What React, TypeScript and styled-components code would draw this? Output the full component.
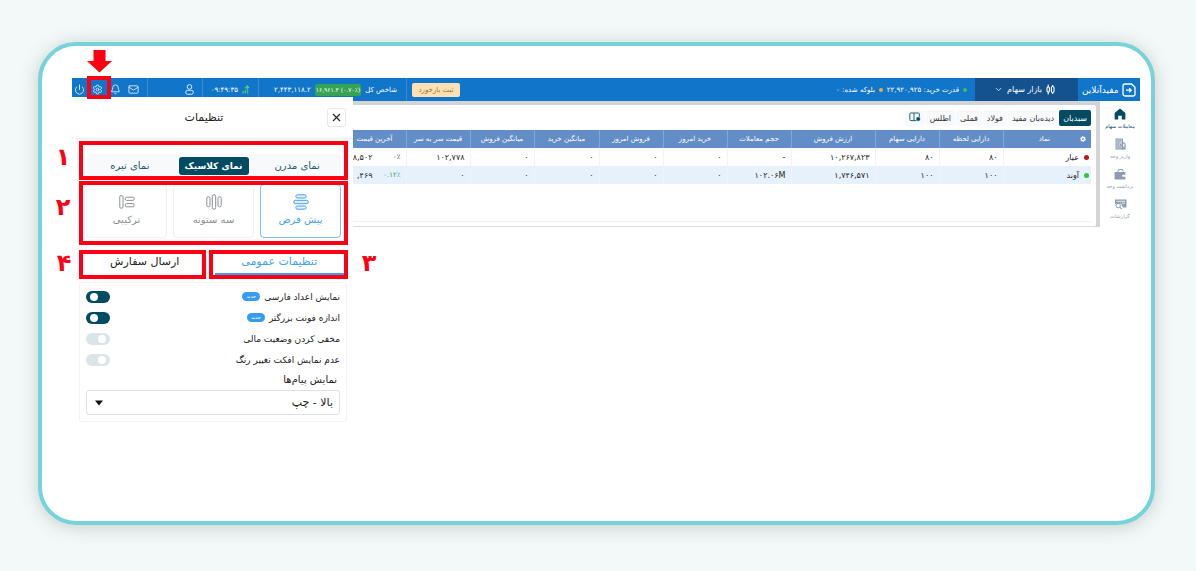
import React, { useState } from 'react';
import styled, { createGlobalStyle } from 'styled-components';
import { Mail, Bell, Power, X, ChevronDown, Settings } from 'lucide-react';

const GlobalStyle = createGlobalStyle`
  *, *::before, *::after { box-sizing: border-box; }
  html, body { margin: 0; background: #f3f9f9; }
  body, button, select, input {
    font-family: 'DejaVu Sans', sans-serif;
  }
  button, select, input { margin: 0; padding: 0; border: 0; background: none; color: inherit; }
  svg { flex: none; }
`;

const RED = '#fd0013';
const NAVY = '#034b63';
const BLUE = '#1175ca';

const Page = styled.div`
  display: flex;
  min-height: 100vh;
  padding: 42px 41px 46px 38px;
`;

const Frame = styled.main`
  flex: 1;
  min-width: 0;
  padding: 32px 11px 32px 30px;
  background: #fff;
  border: 4px solid #76d3d8;
  border-radius: 38px;
  box-shadow: 0 2px 18px rgba(70, 80, 80, 0.26);
`;

const Shell = styled.div`
  direction: rtl;
`;

const TopBar = styled.header`
  display: flex;
  align-items: stretch;
  height: 23px;
  background: ${BLUE};
  color: #fff;
  font-size: 7px;
  white-space: nowrap;
`;

const BarCell = styled.div<{ $width?: number; $divided?: boolean; $pad?: number; $gap?: number }>`
  display: flex;
  flex: none;
  align-items: center;
  gap: ${(p) => p.$gap ?? 4}px;
  width: ${(p) => (p.$width ? `${p.$width}px` : 'auto')};
  padding: 0 ${(p) => p.$pad ?? 8}px;
  border-right: ${(p) => (p.$divided ? '1px solid #3b8dd3' : '0')};
`;

const Brand = styled.a`
  display: flex;
  flex: none;
  align-items: center;
  justify-content: space-between;
  width: 62px;
  padding: 0 4px;
  color: #fff;
  text-decoration: none;
  font-size: 9px;
`;

const MarketButton = styled.button`
  display: flex;
  flex: none;
  align-items: center;
  gap: 4px;
  width: 103px;
  padding: 0 23px;
  background: #14528f;
  color: #fff;
  font-size: 8px;
  white-space: nowrap;
`;

const Dot = styled.span<{ $color: string; $size?: number }>`
  flex: none;
  width: ${(p) => p.$size ?? 4}px;
  height: ${(p) => p.$size ?? 4}px;
  border-radius: 50%;
  background: ${(p) => p.$color};
`;

const Spacer = styled.div`
  flex: 1;
`;

const Feedback = styled.button`
  align-self: center;
  width: 48px;
  height: 14px;
  margin-left: 5px;
  border-radius: 2px;
  background: #fde1b4;
  color: #9a7440;
  font-size: 7px;
`;

const IndexBadge = styled.span`
  padding: 0 1px;
  border-radius: 2px;
  background: #35a353;
  font-size: 6px;
  line-height: 12px;
`;

const IconButton = styled.button`
  position: relative;
  display: flex;
  flex: none;
  color: #d6e8f8;
`;

const Body = styled.div`
  display: flex;
  align-items: flex-start;
`;

const Rail = styled.nav`
  display: flex;
  flex: none;
  flex-direction: column;
  gap: 8px;
  width: 40px;
  padding-top: 7px;
`;

const RailLink = styled.a<{ $active?: boolean }>`
  display: flex;
  flex-direction: column;
  align-items: center;
  gap: 2px;
  height: 22px;
  color: ${(p) => (p.$active ? NAVY : '#8d9db0')};
  font-size: 5px;
  line-height: 8px;
  text-decoration: none;
  white-space: nowrap;
`;

const Workspace = styled.section`
  flex: 1;
  min-width: 0;
  overflow: hidden;
  padding: 4px 4px 0 0;
  background: #d3d4d5;
`;

const Sheet = styled.div`
  padding: 5px 5px 4px 0;
  background: #fff;
  border-bottom: 1px solid #dedede;
  border-radius: 0 2px 2px 0;
`;

const WatchTabs = styled.div`
  display: flex;
  align-items: center;
  gap: 1px;
  height: 16px;
  margin-bottom: 4px;
`;

const WatchTab = styled.button<{ $active?: boolean }>`
  height: 16px;
  padding: 0 4px;
  border-radius: 2px;
  background: ${(p) => (p.$active ? NAVY : '#f8f9fa')};
  color: ${(p) => (p.$active ? '#fff' : '#333')};
  font-size: 8px;
  white-space: nowrap;
`;

const TableArea = styled.div`
  height: 92px;
  border-bottom: 1px solid #f0f0f0;
`;

const Grid = styled.table`
  width: 748px;
  table-layout: fixed;
  border-collapse: collapse;
  font-size: 8px;
  color: #222;
`;

const HeadCell = styled.th`
  height: 18px;
  padding: 0;
  background: #628dc7;
  color: #fff;
  font-size: 7px;
  font-weight: 400;
  white-space: nowrap;
  border-left: 1px solid #85a7d5;
`;

const HeadName = styled.div`
  display: flex;
  align-items: center;
  gap: 30px;
  padding: 0 5px;
`;

const Row = styled.tr<{ $tint?: boolean }>`
  background: ${(p) => (p.$tint ? '#e7f1fb' : '#fff')};
`;

const Cell = styled.td`
  height: 18px;
  padding: 0 5px;
  border-left: 1px solid #f0f4f8;
  text-align: right;
  white-space: nowrap;
`;

const NameCell = styled.div`
  display: flex;
  align-items: center;
  gap: 5px;
  margin-right: -3px;
`;

const PriceCell = styled.div`
  display: flex;
`;

const Percent = styled.bdi<{ $up?: boolean }>`
  flex: none;
  width: 28px;
  font-size: 7px;
  text-align: right;
  color: ${(p) => (p.$up ? '#3aa15a' : '#333')};
`;

const Drawer = styled.aside`
  position: relative;
  flex: none;
  width: 281px;
  margin-top: -4px;
  background: #fff;
  color: #222;
`;

const DrawerHead = styled.div`
  display: flex;
  align-items: center;
  justify-content: center;
  position: relative;
  height: 42px;
  padding-right: 17px;
  border-bottom: 1px solid #f0f0f0;
`;

const DrawerTitle = styled.h2`
  margin: 0;
  font-size: 11px;
  font-weight: 400;
`;

const CloseButton = styled.button`
  position: absolute;
  top: 11px;
  right: 7px;
  display: flex;
  align-items: center;
  justify-content: center;
  width: 19px;
  height: 19px;
  border: 1px solid #e8e8ee;
  border-radius: 3px;
`;

const Block = styled.div<{ $top: number }>`
  position: relative;
  margin: ${(p) => p.$top}px 7px 0;
  padding: 0 5px 0 7px;
`;

const Segment = styled.div`
  display: grid;
  grid-template-columns: 1fr 1fr 1fr;
  align-items: center;
  height: 23px;
  padding: 0 2px;
  border-radius: 4px;
  background: #f7f9fa;
`;

const SegmentButton = styled.button<{ $active?: boolean }>`
  justify-self: center;
  width: 70px;
  height: 18px;
  border-radius: 3px;
  background: ${(p) => (p.$active ? NAVY : 'transparent')};
  color: ${(p) => (p.$active ? '#fff' : '#245a6e')};
  font-size: ${(p) => (p.$active ? 9 : 10)}px;
  font-weight: ${(p) => (p.$active ? 700 : 400)};
  white-space: nowrap;
`;

const Cards = styled.div`
  display: grid;
  grid-template-columns: 1fr 1fr 1fr;
  gap: 6px;
`;

const Card = styled.button<{ $active?: boolean }>`
  display: flex;
  flex-direction: column;
  align-items: center;
  gap: 2px;
  height: 54px;
  padding-top: 9px;
  border: 1px solid ${(p) => (p.$active ? '#7fbdf8' : '#f0f0f0')};
  border-radius: 4px;
  color: ${(p) => (p.$active ? '#459ff5' : '#8b8f93')};
  font-size: 10px;
  line-height: 16px;
`;

const Tabs = styled.div`
  display: flex;
  gap: 11px;
  margin: 12px 9px 0 14px;
`;

const Tab = styled.button<{ $active?: boolean }>`
  position: relative;
  flex: ${(p) => (p.$active ? '130 1 0' : '118 1 0')};
  min-width: 0;
  height: 25px;
  border-bottom: 2px solid ${(p) => (p.$active ? '#3d9df6' : 'transparent')};
  color: ${(p) => (p.$active ? '#459ff5' : '#222')};
  font-size: 11px;
`;

const Options = styled.div`
  margin: 7px 6px 0 7px;
  padding: 3px 6px 6px;
  border: 1px solid #f2f3f4;
  border-radius: 3px;
`;

const OptionRow = styled.label`
  display: flex;
  align-items: center;
  gap: 4px;
  height: 21px;
  font-size: 9px;
`;

const NewTag = styled.span`
  width: 18px;
  height: 9px;
  border-radius: 5px;
  background: #379bf5;
  color: #fff;
  font-size: 5px;
  line-height: 8px;
  text-align: center;
`;

const Switch = styled.input`
  appearance: none;
  flex: none;
  width: 24px;
  height: 12px;
  margin-right: auto;
  padding: 2px;
  border-radius: 6px;
  background: #dbe5e9;
  &::before {
    content: '';
    display: block;
    width: 8px;
    height: 8px;
    margin-right: 2px;
    border-radius: 50%;
    background: #fff;
  }
  &:checked { background: ${NAVY}; }
  &:checked::before { margin-right: 10px; }
`;

const FieldLabel = styled.label`
  display: block;
  padding-right: 3px;
  font-size: 10px;
  line-height: 20px;
`;

const SelectWrap = styled.div`
  position: relative;
`;

const Select = styled.select`
  appearance: none;
  display: block;
  width: 100%;
  height: 25px;
  padding: 0 6px;
  border: 1px solid #dde1e4;
  border-radius: 3px;
  font-size: 11px;
`;

const Caret = styled.svg`
  position: absolute;
  top: 10px;
  left: 8px;
  pointer-events: none;
`;

const Mark = styled.span<{ $t: number; $r: number; $b: number; $l: number }>`
  position: absolute;
  inset: ${(p) => `${p.$t}px ${p.$r}px ${p.$b}px ${p.$l}px`};
  border: 4px solid ${RED};
  pointer-events: none;
  z-index: 2;
`;

const MarkNumber = styled.span<{ $left?: number; $right?: number; $top: number }>`
  position: absolute;
  top: ${(p) => p.$top}px;
  left: ${(p) => (p.$left === undefined ? 'auto' : `${p.$left}px`)};
  right: ${(p) => (p.$right === undefined ? 'auto' : `${p.$right}px`)};
  width: 20px;
  color: ${RED};
  font-size: 24px;
  font-weight: 700;
  line-height: 24px;
  text-align: center;
`;

const Arrow = styled.svg`
  position: absolute;
  left: 50%;
  bottom: 22px;
  margin-left: -11px;
`;

const LogoIcon = () => (
  <svg width="14" height="14" viewBox="0 0 14 14" fill="none" stroke="#fff" strokeWidth="1.3">
    <path d="M1 4.500V3a2 2 0 0 1 2-2h6.500L13 4.300V11a2 2 0 0 1-2 2H3a2 2 0 0 1-2-2V4" />
    <path d="M4 7.200h5M7.200 5.200 9.200 7.200l-2 2" />
  </svg>
);

const CandlesIcon = () => (
  <svg width="9" height="11" viewBox="0 0 9 11" fill="none" stroke="#fff" strokeWidth="1.1">
    <rect x="5.4" y="2.500" width="2.600" height="6" rx="1.200" />
    <path d="M6.700 1v1.500M6.700 8.500V10M2.200 .5V3M2.200 8v2.500" />
    <rect x="1" y="3" width="2.400" height="5" rx="1" />
  </svg>
);

const UserIcon = () => (
  <svg width="9" height="11" viewBox="0 0 9 11" fill="none" stroke="#d6e8f8">
    <circle cx="4.5" cy="2.9" r="2.3" />
    <rect x=".7" y="6.3" width="7.6" height="4" rx="2" />
  </svg>
);

const SignalIcon = () => (
  <svg width="8" height="9" viewBox="0 0 8 9" fill="none" stroke="#58cf70" strokeWidth="1.2">
    <path d="M1 8.5V6M3.3 8.5V5M5.6 8.5V5.2M7 3.2 5.2 1 3 3.4" />
    <path d="M5.2 1v4" />
  </svg>
);

const HomeIcon = () => (
  <svg width="12" height="12" viewBox="0 0 12 12" fill="currentColor">
    <path d="M6 .4 11.4 5v6.6H7.8V7.8H4.2v3.8H.6V5Z" />
  </svg>
);

const DepositIcon = () => (
  <svg width="11" height="12" viewBox="0 0 11 12" fill="none" stroke="currentColor">
    <rect x="1" y="1" width="6.5" height="10" fill="#c5ced8" />
    <path d="M2.5 3h3.5M2.5 5h2M2.5 7.2h1.4M2.5 9h3.5M5 6l4.5 4.5M8 4.5 10 6v5H6.5" strokeWidth="1.2" />
  </svg>
);

const WalletIcon = () => (
  <svg width="12" height="12" viewBox="0 0 12 12" fill="currentColor">
    <path d="M3 3.4 4.8 1h3.8L9.8 3.4H8.7L8 2H5.4L4.4 3.4Z" />
    <path d="M.6 4h10.8v2.700H9a1 1 0 0 0 0 2h2.400v2.700H.6Z" />
  </svg>
);

const ReportIcon = () => (
  <svg width="13" height="12" viewBox="0 0 13 12" fill="currentColor">
    <path d="M1 1.5h11.5v8H8.800L7 5.5 1 6Z" />
    <path d="M2.5 3.3h8.5M8 5.2h3" stroke="#fff" strokeWidth=".8" />
    <circle cx="4.2" cy="7.6" r="2.2" fill="#fff" stroke="currentColor" />
    <path d="m5.8 9.2 2 2" stroke="currentColor" strokeWidth="1.2" />
  </svg>
);

const BoardIcon = () => (
  <svg width="12" height="10" viewBox="0 0 12 10" fill="none" stroke="#21667a">
    <rect x=".8" y="1" width="9.6" height="7.6" rx="1" />
    <path d="M5 1v7.6" />
    <circle cx="9.2" cy="7" r="2.3" fill="#034b63" stroke="#fff" strokeWidth=".6" />
  </svg>
);

const GearGlyph = () => (
  <svg width="6" height="6" viewBox="0 0 6 6" fill="none" stroke="#fff">
    <circle cx="3" cy="3" r="1.6" strokeWidth="1.4" />
    <circle cx="3" cy="3" r="2.5" strokeWidth=".9" strokeDasharray="1.3 1.3" />
  </svg>
);

const RowsIcon = () => (
  <svg width="16" height="16" viewBox="0 0 16 16" fill="#e3f1fe" stroke="currentColor">
    <rect x="2.8" y=".8" width="10.4" height="3.2" rx="1.6" />
    <rect x=".7" y="6.3" width="14.6" height="3.4" rx="1.7" />
    <rect x="2.8" y="12" width="10.4" height="3.2" rx="1.6" />
  </svg>
);

const ColumnsIcon = () => (
  <svg width="16" height="16" viewBox="0 0 16 16" fill="none" stroke="currentColor">
    <rect x=".8" y="2.8" width="3.2" height="10" rx="1.4" />
    <rect x="6.3" y=".7" width="3.4" height="14.6" rx="1.7" />
    <rect x="12" y="2.8" width="3.2" height="10" rx="1.4" />
  </svg>
);

const MixedIcon = () => (
  <svg width="16" height="16" viewBox="0 0 16 16" fill="none" stroke="currentColor">
    <rect x=".8" y="1.6" width="3.2" height="12.6" rx="1.2" />
    <rect x="6.2" y="3.2" width="9" height="3.2" rx="1.4" />
    <rect x="6.2" y="9.6" width="9" height="3.2" rx="1.4" />
  </svg>
);

const columns = [
  { name: 'دارایی لحظه', width: 64 },
  { name: 'دارایی سهام', width: 64 },
  { name: 'ارزش فروش', width: 84 },
  { name: 'حجم معاملات', width: 64 },
  { name: 'خرید امروز', width: 64 },
  { name: 'فروش امروز', width: 64 },
  { name: 'میانگین خرید', width: 65 },
  { name: 'میانگین فروش', width: 64 },
  { name: 'قیمت سر به سر', width: 64 },
  { name: 'آخرین قیمت', width: 63 },
];

const holdings = [
  {
    name: 'عیار', color: '#b7192b', up: false, percent: '۰٪', price: '۸,۵۰۲',
    values: ['۸۰', '۸۰', '۱۰,۲۶۷,۸۲۳', '-', '۰', '۰', '۰', '۰', '۱۰۲,۷۷۸'],
  },
  {
    name: 'آوند', color: '#37c13d', up: true, percent: '۰.۱۲٪', price: ',۴۶۹',
    values: ['۱۰۰', '۱۰۰', '۱,۷۴۶,۵۷۱', '۱۰۲.۰۶M', '۰', '۰', '۰', '۰', '۰'],
  },
];

const options = [
  { id: 'digits', label: 'نمایش اعداد فارسی', fresh: true, on: true },
  { id: 'font', label: 'اندازه فونت بزرگتر', fresh: true, on: true },
  { id: 'hide', label: 'مخفی کردن وضعیت مالی', fresh: false, on: false },
  { id: 'effect', label: 'عدم نمایش افکت تغییر رنگ', fresh: false, on: false },
];

const themes = ['نمای مدرن', 'نمای کلاسیک', 'نمای تیره'];
const layouts = [
  { label: 'پیش فرض', icon: <RowsIcon /> },
  { label: 'سه ستونه', icon: <ColumnsIcon /> },
  { label: 'ترکیبی', icon: <MixedIcon /> },
];

function AppBar() {
  return (
    <TopBar>
      <Brand href="#">
        <LogoIcon />
        مفیدآنلاین
      </Brand>
      <MarketButton>
        <CandlesIcon />
        بازار سهام
        <ChevronDown size={9} />
      </MarketButton>
      <BarCell>
        <Dot $color="#39c253" />
        <span>قدرت خرید: ۲۲,۹۲۰,۹۲۵</span>
        <Dot $color="#f5a93b" />
        <span>بلوکه شده: ۰</span>
      </BarCell>
      <Spacer />
      <Feedback>ثبت بازخورد</Feedback>
      <BarCell $width={148} $divided $pad={9}>
        <span>شاخص کل</span>
        <IndexBadge dir="ltr">۱۶,۹۶۱.۳ (۰.۷۰٪)</IndexBadge>
        <bdi>۲,۴۴۳,۱۱۸.۲</bdi>
      </BarCell>
      <BarCell $width={56} $divided>
        <SignalIcon />
        <bdi dir="ltr">۰۹:۴۹:۳۵</bdi>
      </BarCell>
      <BarCell $width={55} $divided>
        <IconButton aria-label="حساب کاربری"><UserIcon /></IconButton>
      </BarCell>
      <BarCell $width={76} $divided $gap={7}>
        <IconButton aria-label="پیام‌ها"><Mail size={11} /></IconButton>
        <IconButton aria-label="اعلان‌ها"><Bell size={11} /></IconButton>
        <IconButton aria-label="تنظیمات">
          <Settings size={11} />
          <Mark $t={-8} $r={-8} $b={-4} $l={-5} />
          <Arrow width="25" height="23" viewBox="0 0 25 23" fill={RED}>
            <path d="M6.500 0h12v11H25L12.500 22.500 0 11h6.500Z" />
          </Arrow>
        </IconButton>
        <IconButton aria-label="خروج"><Power size={11} /></IconButton>
      </BarCell>
    </TopBar>
  );
}

function Watchlist() {
  return (
    <Workspace>
      <Sheet>
        <WatchTabs>
          <WatchTab $active>سبدبان</WatchTab>
          <WatchTab>دیده‌بان مفید</WatchTab>
          <WatchTab>فولاد</WatchTab>
          <WatchTab>فملی</WatchTab>
          <WatchTab>اطلس</WatchTab>
          <WatchTab aria-label="تنظیم ستون‌ها"><BoardIcon /></WatchTab>
        </WatchTabs>
        <TableArea>
          <Grid>
            <colgroup>
              <col style={{ width: 88 }} />
              {columns.map((c) => <col key={c.name} style={{ width: c.width }} />)}
            </colgroup>
            <thead>
              <tr>
                <HeadCell><HeadName><GearGlyph />نماد</HeadName></HeadCell>
                {columns.map((c) => <HeadCell key={c.name}>{c.name}</HeadCell>)}
              </tr>
            </thead>
            <tbody>
              {holdings.map((h, i) => (
                <Row key={h.name} $tint={i % 2 === 1}>
                  <Cell><NameCell><Dot $color={h.color} $size={5} />{h.name}</NameCell></Cell>
                  {h.values.map((v, k) => <Cell key={k}><bdi>{v}</bdi></Cell>)}
                  <Cell>
                    <PriceCell>
                      <Percent dir="ltr" $up={h.up}>{h.percent}</Percent>
                      <bdi dir="ltr">{h.price}</bdi>
                    </PriceCell>
                  </Cell>
                </Row>
              ))}
            </tbody>
          </Grid>
        </TableArea>
      </Sheet>
    </Workspace>
  );
}

function SettingsDrawer() {
  const [theme, setTheme] = useState(1);
  const [layout, setLayout] = useState(0);
  const [tab, setTab] = useState(0);
  return (
    <Drawer>
      <DrawerHead>
        <CloseButton aria-label="بستن"><X size={13} /></CloseButton>
        <DrawerTitle>تنظیمات</DrawerTitle>
      </DrawerHead>
      <Block $top={15}>
        <Segment>
          {themes.map((t, i) => (
            <SegmentButton key={t} $active={i === theme} onClick={() => setTheme(i)}>{t}</SegmentButton>
          ))}
        </Segment>
        <Mark $t={-13} $r={-2} $b={-3} $l={0} />
        <MarkNumber $left={-26} $top={-9}>۱</MarkNumber>
      </Block>
      <Block $top={7}>
        <Cards>
          {layouts.map((l, i) => (
            <Card key={l.label} $active={i === layout} onClick={() => setLayout(i)}>
              {l.icon}
              {l.label}
            </Card>
          ))}
        </Cards>
        <Mark $t={-3} $r={-2} $b={-7} $l={0} />
        <MarkNumber $left={-26} $top={11}>۲</MarkNumber>
      </Block>
      <Tabs>
        <Tab $active={tab === 0} onClick={() => setTab(0)}>
          تنظیمات عمومی
          <Mark $t={0} $r={-4} $b={-6} $l={-6} />
          <MarkNumber $right={-35} $top={1}>۳</MarkNumber>
        </Tab>
        <Tab $active={tab === 1} onClick={() => setTab(1)}>
          ارسال سفارش
          <Mark $t={0} $r={-2} $b={-6} $l={-7} />
          <MarkNumber $left={-32} $top={1}>۴</MarkNumber>
        </Tab>
      </Tabs>
      <Options>
        {options.map((o) => (
          <OptionRow key={o.id}>
            {o.label}
            {o.fresh && <NewTag>جدید</NewTag>}
            <Switch type="checkbox" defaultChecked={o.on} />
          </OptionRow>
        ))}
        <FieldLabel htmlFor="messages">نمایش پیام‌ها</FieldLabel>
        <SelectWrap>
          <Select id="messages" defaultValue="top-left">
            <option value="top-left">بالا - چپ</option>
            <option value="top-right">بالا - راست</option>
          </Select>
          <Caret width="10" height="6" viewBox="0 0 10 6" fill="#111">
            <path d="M1 .5h8L5 5.500Z" />
          </Caret>
        </SelectWrap>
      </Options>
    </Drawer>
  );
}

export default function App() {
  return (
    <Page>
      <GlobalStyle />
      <Frame>
        <Shell>
          <AppBar />
          <Body>
            <Rail>
              <RailLink href="#" $active><HomeIcon />معاملات سهام</RailLink>
              <RailLink href="#"><DepositIcon />واریز وجه</RailLink>
              <RailLink href="#"><WalletIcon />برداشت وجه</RailLink>
              <RailLink href="#"><ReportIcon />گزارشات</RailLink>
            </Rail>
            <Watchlist />
            <SettingsDrawer />
          </Body>
        </Shell>
      </Frame>
    </Page>
  );
}
